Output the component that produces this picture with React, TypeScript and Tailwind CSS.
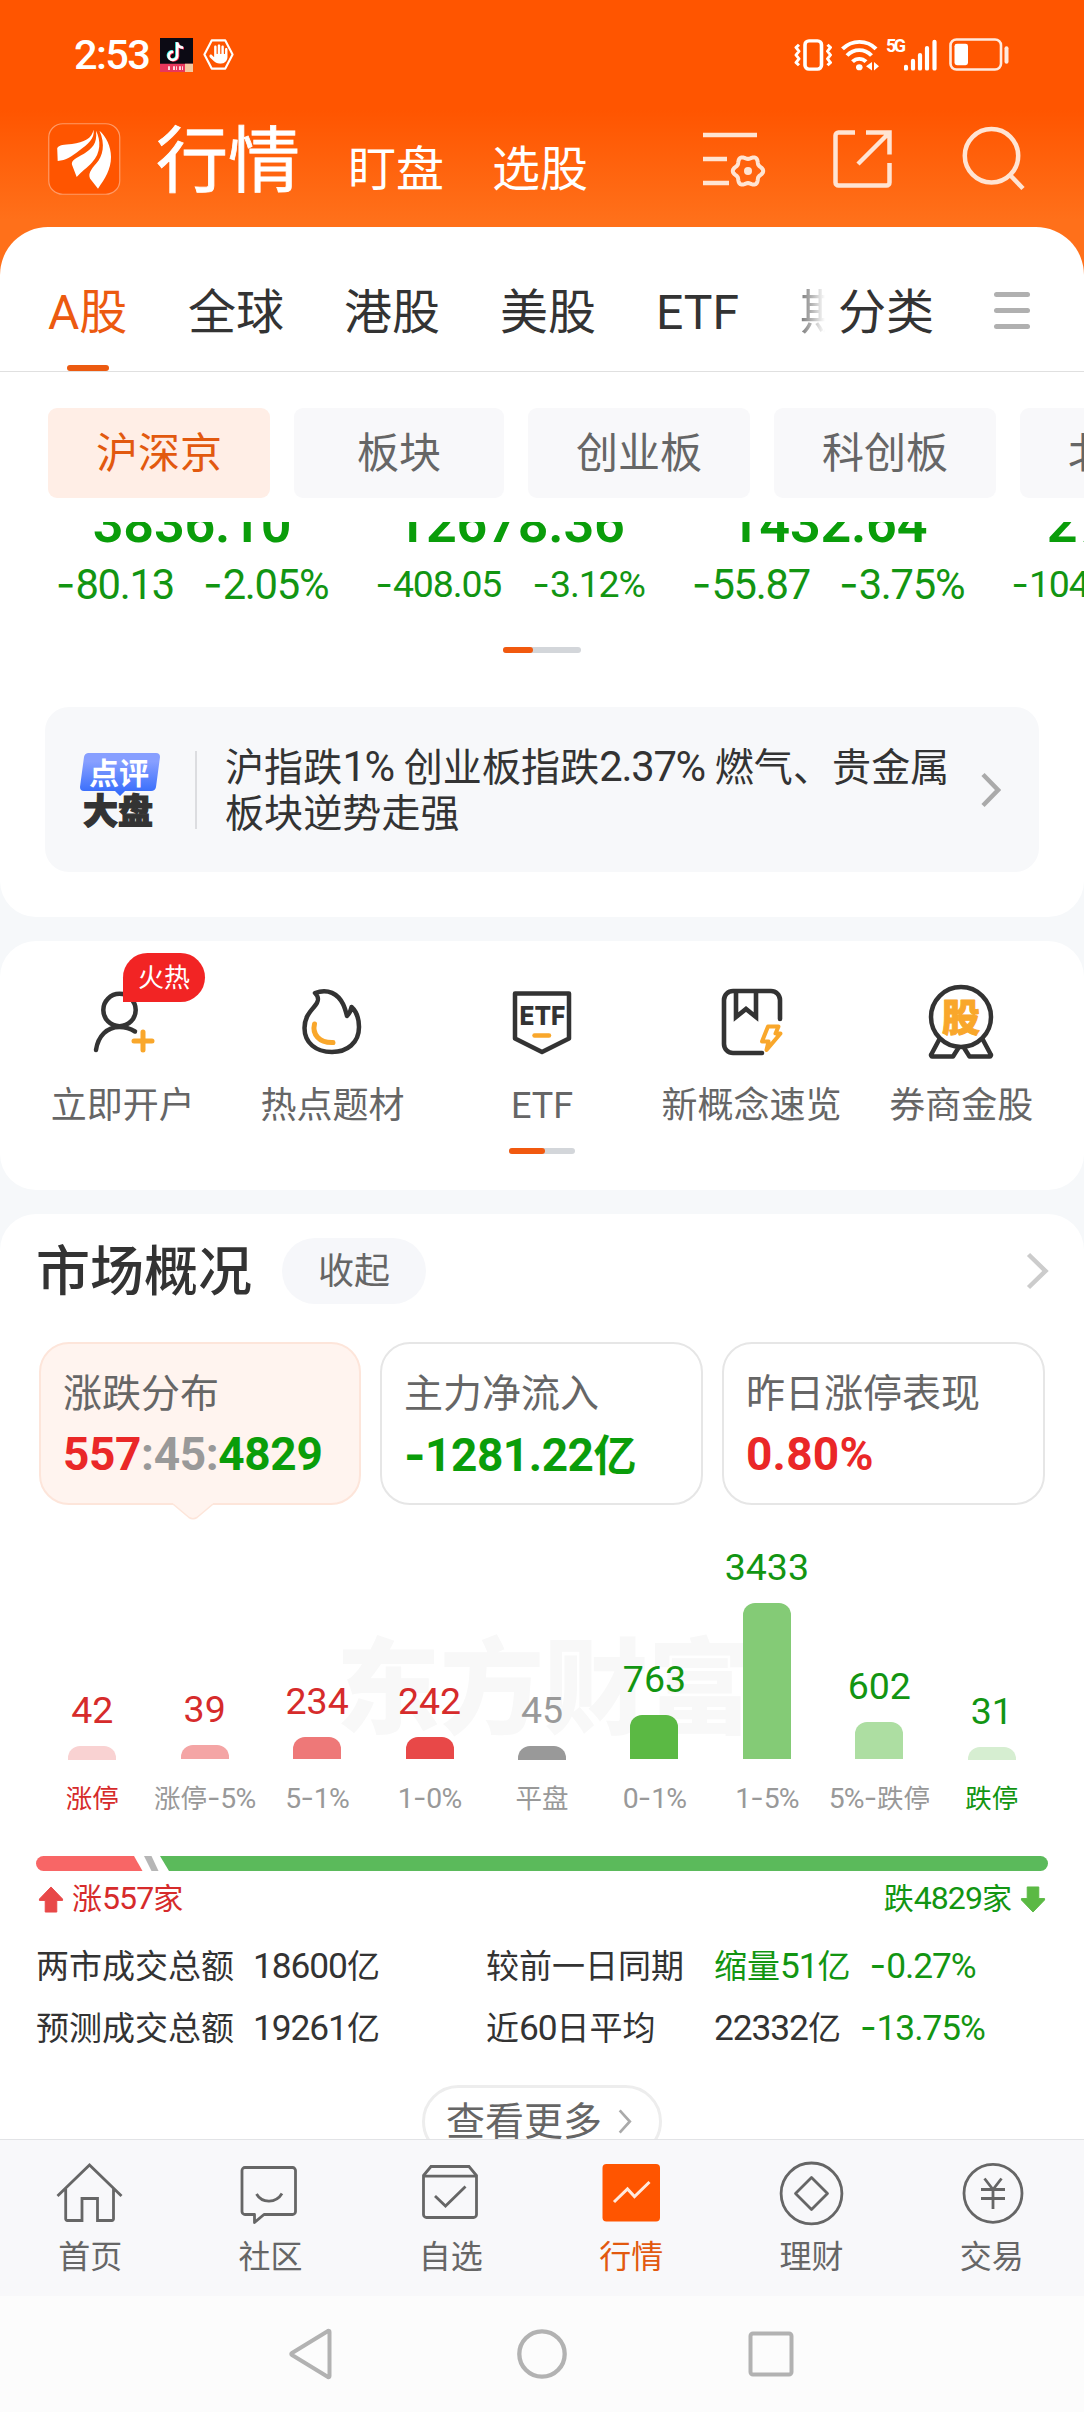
import React from "react";
import { FaHand } from "react-icons/fa6";

const tabs = ["全球", "港股", "美股", "ETF"];
const chips = ["板块", "创业板", "科创板", "北交所"];

const indexes = [
    { value: "3836.10", diff: "-80.13", rate: "-2.05%", small: false },
    { value: "12678.36", diff: "-408.05", rate: "-3.12%", small: true },
    { value: "1432.64", diff: "-55.87", rate: "-3.75%", small: false },
    { value: "2715.48", diff: "-104.62", rate: "-3.71%", small: true },
];

const distribution = [
    { count: "42", label: "涨停", height: 14, bar: "bg-[#f9d2d2]", text: "text-[#d62b2b]", labelText: "text-[#d62b2b]" },
    { count: "39", label: "涨停-5%", height: 14, bar: "bg-[#f4a5a5]", text: "text-[#d62b2b]", labelText: "text-[#999]" },
    { count: "234", label: "5-1%", height: 22, bar: "bg-[#ee7878]", text: "text-[#d62b2b]", labelText: "text-[#999]" },
    { count: "242", label: "1-0%", height: 22, bar: "bg-[#e84848]", text: "text-[#d62b2b]", labelText: "text-[#999]" },
    { count: "45", label: "平盘", height: 14, bar: "bg-[#999]", text: "text-[#999]", labelText: "text-[#999]" },
    { count: "763", label: "0-1%", height: 44, bar: "bg-[#5bb944]", text: "text-[#129512]", labelText: "text-[#999]" },
    { count: "3433", label: "1-5%", height: 156, bar: "bg-[#84cb76]", text: "text-[#129512]", labelText: "text-[#999]" },
    { count: "602", label: "5%-跌停", height: 37, bar: "bg-[#addea2]", text: "text-[#129512]", labelText: "text-[#999]" },
    { count: "31", label: "跌停", height: 13, bar: "bg-[#d6eed1]", text: "text-[#129512]", labelText: "text-[#129512]" },
];

// Digits run a little taller and tighter than the Chinese glyphs beside them
const Mixed = ({ text }: { text: string }) => (
    <>
        {text.split(/([0-9.:%]+|-)/).map((part, i) => {
            if (part === "-") return <span key={i} className="font-['Inter'] text-[1.1em] leading-none">-</span>;
            if (/^[0-9.:%]+$/.test(part)) return <span key={i} className="text-[1.07em] leading-none tracking-[-0.03em]">{part}</span>;
            return part;
        })}
    </>
);

// Six-lobed cog around (cx, cy)
const gearPath = (cx: number, cy: number) => {
    const points: string[] = [];
    for (let deg = 0; deg < 360; deg += 5) {
        const a = (deg * Math.PI) / 180;
        const r = 13.6 + 1.6 * Math.cos(6 * a);
        points.push(`${(cx + r * Math.cos(a)).toFixed(2)} ${(cy + r * Math.sin(a)).toFixed(2)}`);
    }
    return `M${points.join("L")}Z`;
};

const StatusBar = () => (
    <div className="flex h-[109px] items-center px-[74px] text-white">
        <span className="w-[86px] text-[41.5px] font-medium leading-none tracking-[-0.04em]">2:53</span>
        <svg width="33" height="34" viewBox="0 0 33 35" preserveAspectRatio="none">
            <rect width="33" height="35" fill="#0c0a14" />
            <rect y="26.5" width="33" height="8.5" fill="#e8375c" />
            <rect x="25" y="26.5" width="8" height="8.5" fill="#f4c9a0" />
            <path d="M8 31h3M13 31h4M19 31h4" stroke="#ffd5dc" strokeWidth="4" strokeDasharray="2 1" />
            <g fill="none" strokeWidth="2.6">
                <path d="M16.5 4v14a4.300 4.300 0 1 1-4-4.400M16.500 4.500c.6 3 3 5 6 5" stroke="#25f4ee" />
                <path d="M18 5v14a4.300 4.300 0 1 1-4-4.400M18 5.500c.6 3 3 5 6 5" stroke="#fe2c55" />
                <path d="M17.200 4.500v14a4.300 4.300 0 1 1-4-4.400M17.200 5c.6 3 3 5 6 5" stroke="#fff" />
            </g>
        </svg>
        <svg className="ml-[9px]" width="33" height="33" viewBox="0 0 33 34">
            <path d="M9.500 2.500h14L31 17l-7.500 14.500h-14L2 17Z" fill="none" stroke="currentColor" strokeWidth="2.200" strokeLinejoin="round" />
            <FaHand x="7" y="6.500" size={20} />
        </svg>
        <svg className="ml-auto" width="38" height="32" viewBox="0 0 38 34" preserveAspectRatio="none" fill="none" stroke="currentColor">
            <rect x="11" y="2" width="16.500" height="30" rx="4" strokeWidth="3.600" />
            <path d="M5 6l-3 3 3 4-3 4 3 4-3 4 3 3M33.500 6l3 3-3 4 3 4-3 4 3 4-3 3" strokeWidth="3" strokeLinejoin="round" />
        </svg>
        <svg className="ml-[9px]" width="38" height="32" viewBox="0 0 38 34" preserveAspectRatio="none" fill="none" stroke="currentColor" strokeWidth="4">
            <path d="M1.500 10.500c9.500-10 24.500-10 33.500 0M6 17.500c7-7.500 17.500-7.500 24.500 0M11.500 24c4-4 9.500-4 13.500 0" />
            <circle cx="18.300" cy="30" r="3.300" fill="currentColor" stroke="none" />
            <path d="M31 24.500v9l-6-4.500ZM33 24.500v9l5-4.500Z" fill="currentColor" stroke="none" />
        </svg>
        <span className="ml-[7px] w-[18px] self-start whitespace-nowrap pt-[37px] text-[18px] font-bold leading-none tracking-[-0.15em]">5G</span>
        <svg width="33" height="32" viewBox="0 0 33 34" preserveAspectRatio="none" stroke="currentColor" strokeWidth="4.200" strokeLinecap="round">
            <path d="M2 29.500v2M9 23v8.500M16 17v14.500M23 9.500v22M30.500 3v28.500" />
        </svg>
        <svg className="ml-[12px]" width="61" height="33" viewBox="0 0 61 34" preserveAspectRatio="none" fill="none">
            <rect x="1.500" y="1.500" width="50.500" height="31" rx="6" stroke="#ffe9dd" strokeWidth="2.600" />
            <rect x="5.500" y="6" width="13.500" height="22" rx="2.500" fill="#fff" />
            <rect x="55.500" y="8.500" width="4" height="18" rx="2" fill="#ffe9dd" />
        </svg>
    </div>
);

const TitleRow = () => (
    <div className="flex h-[118px] items-start pl-[48px] pr-[58px] pt-[14px] text-white">
        <svg width="73" height="72" viewBox="0 0 73 74" preserveAspectRatio="none">
            <rect x=".75" y=".75" width="71" height="72.500" rx="14" fill="#ff5500" stroke="#ff9a66" strokeWidth="1.200" />
            <g fill="#fff">
                <path d="M45.500 7C44 16 36 20 24 21.500C16 22.500 11 22 9.200 26L9.700 39C18 38.500 24 34 31 28.500C40 22 47 16 45.500 7Z" />
                <path d="M48 8C49.500 22 44 26 36 31.500C28 36 23 38 24 43L28.700 55.500C34 49 39 46.500 44 40.500C53 31 53 18 48 8Z" />
                <path d="M51.500 8C57.500 22 55 34 48 42C43 48 40 52 42 57L50 67.500C57 57 63 48 63 35C63 24 58 14 51.500 8Z" />
            </g>
        </svg>
        <div className="ml-[35px] flex items-baseline gap-[48px] text-[48px] leading-[78px]">
            <span className="text-[72px] [-webkit-text-stroke:0.8px_white]">行情</span>
            <span>盯盘</span>
            <span>选股</span>
        </div>
        <div className="ml-auto mt-[3px] flex text-[#ffe4d3]">
            <svg width="64" height="66" viewBox="0 0 64 66" fill="none" stroke="currentColor" strokeWidth="4.500">
                <path d="M1 9h54M1 33h24M1 57h26" />
                <path d={gearPath(46, 45)} strokeWidth="4" strokeLinejoin="round" />
                <circle cx="46" cy="45" r="4" fill="currentColor" stroke="none" />
            </svg>
            <svg className="ml-[67px]" width="60" height="66" viewBox="0 0 60 66" fill="none" stroke="currentColor" strokeWidth="4.500">
                <path d="M22 6.500H5.500a3 3 0 0 0-3 3V56.500a3 3 0 0 0 3 3H53.500a3 3 0 0 0 3-3V37M33 6.500H56.500V28.500M56 7L25 38" />
            </svg>
            <svg className="ml-[69px]" width="64" height="66" viewBox="0 0 64 66" fill="none" stroke="currentColor" strokeWidth="4.500">
                <circle cx="29.500" cy="29.800" r="26.700" />
                <path d="M47.500 48.500L61 62.500" />
            </svg>
        </div>
    </div>
);

const MarketTabs = () => (
    <div className="flex h-[145px] items-start rounded-t-[48px] border-b border-[#e0e0e0] bg-white pl-[48px] text-[48px] leading-[60px] text-[#333]">
        <div className="flex h-[144px] flex-col items-center pt-[56px] text-[#ec5a10]">
            <span className="w-[80px] whitespace-nowrap">A股</span>
            <span className="mt-auto h-[6px] w-[42px] rounded-full bg-[#ec5a10]" />
        </div>
        <div className="ml-[60px] flex gap-[60px] pt-[56px]">
            {tabs.map((tab) => (
                <span key={tab}>{tab}</span>
            ))}
        </div>
        <span className="ml-[61px] mt-[56px] w-[25px] overflow-hidden bg-gradient-to-r from-[#777] to-white bg-clip-text text-transparent">期</span>
        <span className="ml-[13px] pt-[56px]">分类</span>
        <div className="ml-[60px] mt-[65px] flex flex-col gap-[11px]">
            <span className="h-[5px] w-[36px] rounded-full bg-[#b0b0b0]" />
            <span className="h-[5px] w-[36px] rounded-full bg-[#b0b0b0]" />
            <span className="h-[5px] w-[36px] rounded-full bg-[#b0b0b0]" />
        </div>
    </div>
);

const MarketChips = () => (
    <div className="flex h-[150px] gap-[24px] overflow-hidden bg-white pl-[48px] pt-[36px] text-[42px] leading-[92px] text-[#666]">
        <span className="h-[90px] w-[222px] shrink-0 rounded-[9px] bg-[#ffeee6] text-center text-[#e2590f]">沪深京</span>
        {chips.map((chip) => (
            <span key={chip} className="h-[90px] min-w-[210px] shrink-0 rounded-[9px] bg-[#f8f8fa] px-[48px] text-center">
                {chip}
            </span>
        ))}
    </div>
);

const IndexStrip = () => (
    <div className="flex h-[125px] overflow-hidden pl-[33px] text-[#129512]">
        {indexes.map((item) => (
            <div key={item.value} className="flex w-[318px] shrink-0 flex-col items-center">
                <span className="-mt-[25px] text-[54px] font-semibold leading-[54px] tracking-[-0.005em] text-[#0a9d0a]">{item.value}</span>
                <div className={`mt-[11px] flex whitespace-nowrap leading-[48px] ${item.small ? "gap-[31px] text-[35px]" : "gap-[29px] text-[39px]"}`}>
                    <span><Mixed text={item.diff} /></span>
                    <span><Mixed text={item.rate} /></span>
                </div>
            </div>
        ))}
    </div>
);

const NewsCard = () => (
    <div className="mx-[45px] mt-[54px] flex h-[165px] items-center rounded-[24px] bg-[#f7f8fa] pl-[35px]">
        <svg width="80" height="76" viewBox="0 0 80 76">
            <defs>
                <linearGradient id="review" x1="0" y1="0" x2="0" y2="1">
                    <stop offset="0.200" stopColor="#879fff" />
                    <stop offset="1" stopColor="#2f68fb" />
                </linearGradient>
            </defs>
            <path d="M8 1H76a4 4 0 0 1 4 4L76 35a5 5 0 0 1-5 4H45L40 44L35 39H4a4 4 0 0 1-4-4L4 5a5 5 0 0 1 4-4Z" fill="url(#review)" />
            <text x="9" y="32" fontSize="30" fontWeight="700" fill="#fff" fontFamily="Noto Sans CJK SC, sans-serif">点评</text>
            <text x="3" y="72" fontSize="35" fontWeight="900" fill="#333" stroke="#333" strokeWidth="1.200" fontFamily="Noto Sans CJK SC, sans-serif">大盘</text>
        </svg>
        <span className="ml-[35px] h-[78px] w-[2px] bg-[#dcdde0]" />
        <p className="ml-[28px] mt-[3px] w-[741px] whitespace-nowrap text-[39px] leading-[46px] tracking-[0.12px] text-[#333]">
            <Mixed text="沪指跌1% 创业板指跌2.37% 燃气、贵金属" />
            <br />
            板块逆势走强
        </p>
        <svg className="ml-[15px]" width="20" height="36" viewBox="0 0 20 36" fill="none" stroke="#aaa" strokeWidth="4.500">
            <path d="M2 2.500L17 18L2 33.500" />
        </svg>
    </div>
);

const PagerBar = ({ className, active }: { className: string; active: string }) => (
    <div className={`mx-auto flex h-[6px] rounded-full bg-[#d3d6da] ${className}`}>
        <span className={`rounded-full bg-[#f1590f] ${active}`} />
    </div>
);

const Shortcuts = () => (
    <section className="mt-[24px] h-[249px] shrink-0 rounded-[36px] bg-white px-[18px]">
        <div className="grid grid-cols-5 text-center text-[36px] leading-[44px] text-[#666]">
            <div className="relative flex flex-col items-center">
                <svg className="mt-[37px]" width="72" height="84" viewBox="0 0 72 84" fill="none" stroke="#333" strokeWidth="4.500" strokeLinecap="round">
                    <circle cx="32.500" cy="32" r="16.200" />
                    <path d="M9 72C11 58 20 49 32.500 49C39 49 44 51 48 53.500" />
                    <path d="M56 54v18M47 63h18" stroke="#f9a72b" strokeWidth="5" />
                </svg>
                <span className="mt-[22px]">立即开户</span>
                <span className="absolute left-[105px] top-[12px] h-[49px] w-[82px] rounded-[25px] rounded-bl-none bg-[#f22424] text-[26px] leading-[51px] text-white">火热</span>
            </div>
            <div className="flex flex-col items-center">
                <svg className="mt-[37px]" width="72" height="84" viewBox="0 0 72 84" fill="none" stroke="#333" strokeWidth="4.500" strokeLinejoin="round" strokeLinecap="round">
                    <path d="M19 15C32 10 42 16 47 26C49 30 50 34 51 38C54 35 55 32 55.500 29C61 34 63 42 63 49C63 65 51 74 36 74C20 74 8.500 65 8.500 50C8.500 40 13 35 18 29C22.500 24 24 20 19 15Z" />
                    <path d="M18.500 46C16 56 23 65 37 64.500" stroke="#f9a72b" strokeWidth="5" />
                </svg>
                <span className="mt-[22px]">热点题材</span>
            </div>
            <div className="flex flex-col items-center">
                <svg className="mt-[37px]" width="72" height="84" viewBox="0 0 72 84" fill="none" stroke="#333" strokeWidth="4.500" strokeLinejoin="round">
                    <path d="M9 15.500H63V60.500L36 74L9 60.500Z" />
                    <text x="13.500" y="47" fontSize="26" fontWeight="800" fill="#333" stroke="none" fontFamily="Inter, sans-serif" textLength="46" lengthAdjust="spacingAndGlyphs">ETF</text>
                    <path d="M28.500 57.500H43" stroke="#f9a72b" strokeLinecap="round" />
                </svg>
                <span className="mt-[22px]">ETF</span>
            </div>
            <div className="flex flex-col items-center">
                <svg className="mt-[37px]" width="72" height="84" viewBox="0 0 72 84" fill="none" stroke="#333" strokeWidth="4.600" strokeLinecap="round">
                    <path d="M46 75H17a9 9 0 0 1-9-9V22a9 9 0 0 1 9-9H55a9 9 0 0 1 9 9V41" />
                    <path d="M20 14V39L30 31L40 39V14" />
                    <path d="M52 48.500H62.500L59.500 55.500H64.500L50.500 72L52.500 63.500H46Z" stroke="#f9a72b" strokeWidth="4" strokeLinejoin="round" />
                </svg>
                <span className="mt-[22px] whitespace-nowrap">新概念速览</span>
            </div>
            <div className="flex flex-col items-center">
                <svg className="mt-[37px]" width="72" height="84" viewBox="0 0 72 84" fill="none" stroke="#333" strokeWidth="4.500" strokeLinejoin="round">
                    <circle cx="36" cy="39" r="30" />
                    <path d="M14.500 61L6.500 76a1.500 1.500 0 0 0 1.500 2.500H28L34 69M57.500 61L65.500 76a1.500 1.500 0 0 1-1.500 2.500H44.500L38.500 69" />
                    <text x="17" y="53" fontSize="38" fontWeight="900" fill="#f9a72b" stroke="#f9a72b" strokeWidth="1" fontFamily="Noto Sans CJK SC, sans-serif">股</text>
                </svg>
                <span className="mt-[22px]">券商金股</span>
            </div>
        </div>
        <PagerBar className="mt-[20px] w-[66px]" active="w-[36px]" />
    </section>
);

const SummaryCards = () => (
    <div className="mt-[38px] flex gap-[19px] px-[39px] text-[39px] leading-[48px] text-[#666]">
        <div className="relative h-[163px] w-[322px] rounded-[30px] border-2 border-[#fde5da] bg-[#fff4ef] pl-[22px] pt-[26px]">
            <p>涨跌分布</p>
            <p className="mt-[12px] text-[46px] font-bold leading-[48px] tracking-[-0.008em] text-[#999]">
                <span className="text-[#ea2727]">557</span>:45:<span className="text-[#0a9d0a]">4829</span>
            </p>
            <svg className="absolute left-[132px] top-[159px]" width="40" height="18" viewBox="0 0 40 18">
                <path d="M0 1L16 14.500Q20 17 24 14.500L40 1V0H0Z" fill="#fff4ef" />
                <path d="M0 1L16 14.500Q20 17 24 14.500L40 1" fill="none" stroke="#fde5da" strokeWidth="1.500" />
            </svg>
        </div>
        <div className="h-[163px] w-[323px] rounded-[30px] border-2 border-[#e6e6e6] pl-[22px] pt-[26px]">
            <p>主力净流入</p>
            <p className="mt-[12px] whitespace-nowrap text-[46px] font-bold leading-[48px] tracking-[-0.01em] text-[#0a9d0a]"><span className="font-['Inter']">-</span>1281.22<span className="text-[43px]">亿</span></p>
        </div>
        <div className="h-[163px] w-[323px] rounded-[30px] border-2 border-[#e6e6e6] pl-[22px] pt-[26px]">
            <p>昨日涨停表现</p>
            <p className="mt-[12px] text-[46px] font-bold leading-[48px] tracking-[0.005em] text-[#ea2727]">0.80%</p>
        </div>
    </div>
);

const DistributionChart = () => (
    <div className="relative mt-[20px] h-[289px] px-[36px]">
        <span className="absolute left-[336px] top-[106px] text-[104px] font-black leading-[120px] text-[#f8f8f8]">东方财富</span>
        <div className="relative grid h-full grid-cols-9">
            {distribution.map((item) => (
                <div key={item.label} className="flex flex-col items-center justify-end">
                    <span className={`text-[37.5px] leading-[40px] ${item.text}`}>{item.count}</span>
                    <span className={`mt-[16px] w-[48px] rounded-t-[12px] ${item.bar}`} style={{ height: item.height }} />
                    <span className={`mt-[24px] whitespace-nowrap text-[26.5px] leading-[30px] ${item.labelText}`}>
                        <Mixed text={item.label} />
                    </span>
                </div>
            ))}
        </div>
    </div>
);

const Breadth = () => (
    <div className="px-[36px]">
        <svg className="mt-[42px]" width="1012" height="15" viewBox="0 0 1012 15">
            <path d="M7.500 0H98L106.500 15H7.500A7.500 7.500 0 0 1 7.500 0Z" fill="#f86666" />
            <path d="M108 0H115.500L122.500 15H115.500Z" fill="#b6b6b6" />
            <path d="M124 0H1004.500A7.500 7.500 0 0 1 1004.500 15H133Z" fill="#5bba5b" />
        </svg>
        <div className="mt-[10px] flex h-[36px] items-center text-[30px] leading-[36px]">
            <svg className="ml-[2px]" width="26" height="27" viewBox="0 0 26 28">
                <path d="M13 1L25 13.500V15H19V27H7V15H1V13.500Z" fill="#e84848" stroke="#e84848" strokeLinejoin="round" />
            </svg>
            <span className="ml-[8px] text-[#d62b2b]"><Mixed text="涨557家" /></span>
            <span className="ml-auto text-[#129512]"><Mixed text="跌4829家" /></span>
            <svg className="ml-[8px] mr-[2px]" width="26" height="27" viewBox="0 0 26 28">
                <path d="M13 27L25 14.500V13H19V1H7V13H1V14.500Z" fill="#5bb944" stroke="#5bb944" strokeLinejoin="round" />
            </svg>
        </div>
    </div>
);

const Turnover = () => (
    <div className="mt-[30px] grid grid-cols-[217px_233px_228px_1fr] gap-y-[22px] whitespace-nowrap pl-[36px] text-[33px] leading-[40px] text-[#333]">
        <span>两市成交总额</span>
        <span><Mixed text="18600亿" /></span>
        <span>较前一日同期</span>
        <span className="flex gap-[19px] text-[#129512]">
            <span><Mixed text="缩量51亿" /></span>
            <span><Mixed text="-0.27%" /></span>
        </span>
        <span>预测成交总额</span>
        <span><Mixed text="19261亿" /></span>
        <span><Mixed text="近60日平均" /></span>
        <span className="flex gap-[19px]">
            <span><Mixed text="22332亿" /></span>
            <span className="text-[#129512]"><Mixed text="-13.75%" /></span>
        </span>
    </div>
);

const MarketOverview = () => (
    <section className="mt-[24px] flex-1 rounded-t-[36px] bg-white">
        <div className="flex items-center pl-[36px] pr-[35px] pt-[24px]">
            <h2 className="h-[66px] text-[54px] font-medium leading-[70px] text-[#333]">市场概况</h2>
            <span className="ml-[30px] h-[66px] w-[144px] rounded-full bg-[#f6f7fa] text-center text-[36px] leading-[68px] text-[#666]">收起</span>
            <svg className="ml-auto" width="23" height="40" viewBox="0 0 23 40" fill="none" stroke="#ccc" strokeWidth="4.500">
                <path d="M2.500 3.500L19.500 20L2.500 36.500" />
            </svg>
        </div>
        <SummaryCards />
        <DistributionChart />
        <Breadth />
        <Turnover />
        <div className="mx-auto mt-[36px] flex h-[73px] w-[240px] items-center rounded-full border-[3px] border-[#ededed] pl-[21px] text-[39px] leading-[48px] text-[#666]">
            查看更多
            <svg className="ml-[16px]" width="14" height="25" viewBox="0 0 14 26" fill="none" stroke="#aaa" strokeWidth="2.800">
                <path d="M1.500 1.500L12 13L1.500 24.500" />
            </svg>
        </div>
    </section>
);

const BottomTabs = () => (
    <nav className="grid h-[157px] shrink-0 grid-cols-6 border-t border-[#e2e3e6] bg-[#f8f8fa] pr-[2px] pt-[20px] text-center text-[32px] leading-[40px] text-[#666] [&>div]:flex [&>div]:flex-col [&>div]:items-center [&>div]:gap-[9px]">
        <div>
            <svg width="68" height="68" viewBox="0 0 68 68" fill="none" stroke="currentColor" strokeWidth="2.800">
                <path d="M1.500 36L33.500 5L65.500 36M9.700 29V59a1.500 1.500 0 0 0 1.500 1.500H26V38.500H41.500V60.500H56a1.500 1.500 0 0 0 1.500-1.500V29" />
            </svg>
            首页
        </div>
        <div>
            <svg width="68" height="68" viewBox="0 0 68 68" fill="none" stroke="currentColor" strokeWidth="2.800" strokeLinejoin="round">
                <path d="M9 7.500H56.500a3 3 0 0 1 3 3V51.500a3 3 0 0 1-3 3H28L18.500 62.500V54.500H9a3 3 0 0 1-3-3V10.500a3 3 0 0 1 3-3Z" />
                <path d="M20.500 34C26 43.500 40 43.500 46 33.500" />
            </svg>
            社区
        </div>
        <div>
            <svg width="68" height="68" viewBox="0 0 68 68" fill="none" stroke="currentColor" strokeWidth="2.800">
                <path d="M6.500 15.500L14 6.500H52L59.500 15.500V54.500a3 3 0 0 1-3 3H9.500a3 3 0 0 1-3-3ZM6.500 16.200H59.500M18 36L28.500 46L48.500 26.500" />
            </svg>
            自选
        </div>
        <div className="text-[#e2590f]">
            <svg width="68" height="68" viewBox="0 0 68 68" fill="none">
                <rect x="5.500" y="4" width="57.500" height="57.500" rx="4" fill="#ff5500" />
                <path d="M17 42L30.500 29L37.500 36.500L52.500 22" stroke="#ffe9dd" strokeWidth="3" />
            </svg>
            行情
        </div>
        <div>
            <svg width="68" height="68" viewBox="0 0 68 68" fill="none" stroke="currentColor" strokeWidth="2.800" strokeLinejoin="round">
                <circle cx="34.500" cy="33.400" r="30.400" />
                <path d="M34.500 17.500L50.500 33.500L34.500 49.500L18.500 33.500Z" />
            </svg>
            理财
        </div>
        <div>
            <svg width="68" height="68" viewBox="0 0 68 68" fill="none" stroke="currentColor" strokeWidth="2.800">
                <circle cx="35" cy="33.300" r="29" />
                <path d="M26.500 18.500L35 29.500L43.500 18.500M35 29.500V49M23 29.500H47M23 38.500H47" />
            </svg>
            交易
        </div>
    </nav>
);

const SystemNav = () => (
    <div className="flex h-[116px] shrink-0 items-center bg-[#fcfcfc] pl-[287px]">
        <svg width="48" height="56" viewBox="0 0 48 56" fill="none" stroke="#b2b2b2" strokeWidth="4" strokeLinejoin="round">
            <path d="M42.500 6V50Q42.500 51.500 41 51L5 29Q3.500 28 5 27L41 5Q42.500 4.500 42.500 6Z" />
        </svg>
        <svg className="ml-[179px]" width="56" height="56" viewBox="0 0 56 56" fill="none" stroke="#b2b2b2" strokeWidth="4.300">
            <circle cx="28" cy="28" r="22.700" />
        </svg>
        <svg className="ml-[176px]" width="52" height="56" viewBox="0 0 52 56" fill="none" stroke="#b2b2b2" strokeWidth="4">
            <rect x="4.500" y="7.500" width="41" height="41" rx="2.500" />
        </svg>
    </div>
);

export default function App() {
    return (
        <div className="flex h-[2412px] w-[1084px] flex-col overflow-hidden bg-[#f6f8fa] font-['Roboto','Noto_Sans_CJK_SC',sans-serif]">
            <main className="flex h-[2139px] shrink-0 flex-col overflow-hidden">
                <header className="shrink-0 bg-[linear-gradient(180deg,#ff5500_0px,#ff5500_110px,#ff701a_220px,#ff701a_100%)]">
                    <StatusBar />
                    <TitleRow />
                    <MarketTabs />
                </header>
                <section className="h-[545px] shrink-0 rounded-b-[36px] bg-white">
                    <MarketChips />
                    <IndexStrip />
                    <PagerBar className="w-[78px]" active="w-[30px]" />
                    <NewsCard />
                </section>
                <Shortcuts />
                <MarketOverview />
            </main>
            <BottomTabs />
            <SystemNav />
        </div>
    );
}
